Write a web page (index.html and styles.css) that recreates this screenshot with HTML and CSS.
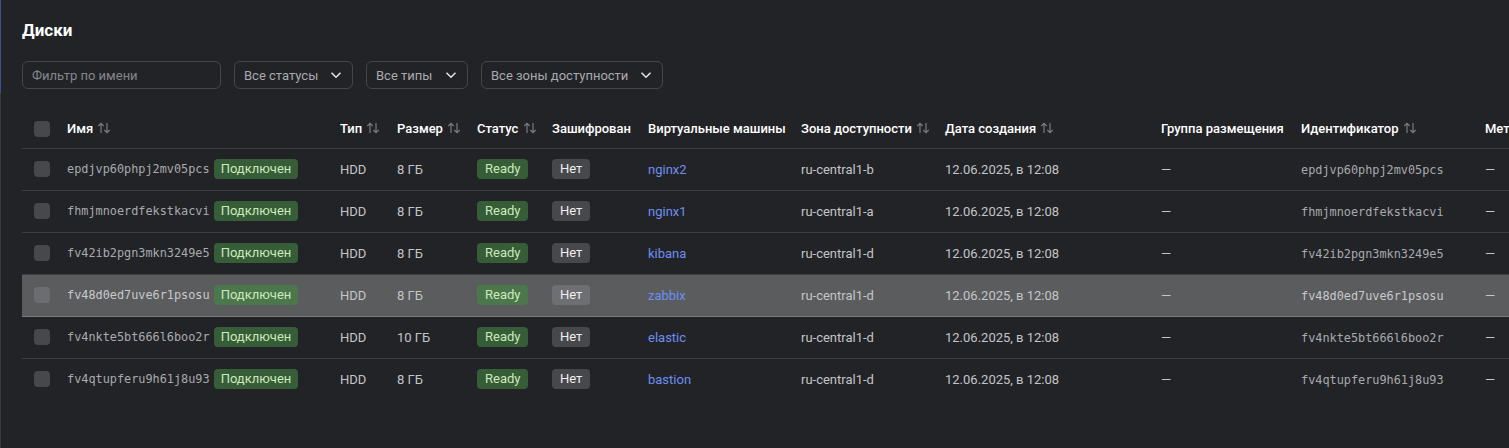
FILE: index.html
```html
<!DOCTYPE html>
<html lang="ru">
<head>
<meta charset="utf-8">
<title>Диски</title>
<link rel="stylesheet" href="styles.css">
</head>
<body>
<div class="page">
  <h1 class="title">Диски</h1>
  <div class="filters">
    <div class="input">Фильтр по имени</div>
    <div class="select s1"><span>Все статусы</span><svg class="chev" width="12" height="8" viewBox="0 0 12 8"><path d="M1.5 1.8 6 6.2 10.5 1.8" fill="none" stroke="#e6e6e6" stroke-width="1.5"/></svg></div>
    <div class="select s2"><span>Все типы</span><svg class="chev" width="12" height="8" viewBox="0 0 12 8"><path d="M1.5 1.8 6 6.2 10.5 1.8" fill="none" stroke="#e6e6e6" stroke-width="1.5"/></svg></div>
    <div class="select s3"><span>Все зоны доступности</span><svg class="chev" width="12" height="8" viewBox="0 0 12 8"><path d="M1.5 1.8 6 6.2 10.5 1.8" fill="none" stroke="#e6e6e6" stroke-width="1.5"/></svg></div>
  </div>
  <div class="table-wrap">
    <table class="grid">
      <colgroup>
        <col class="c-chk"><col class="c-name"><col class="c-type"><col class="c-size"><col class="c-status"><col class="c-enc"><col class="c-vm"><col class="c-zone"><col class="c-date"><col class="c-group"><col class="c-id"><col class="c-meta">
      </colgroup>
      <thead>
        <tr>
          <th><span class="chk"></span></th>
          <th>Имя <svg class="sort" width="14" height="12" viewBox="0 0 14 12"><path d="M4 11V1.3M1.3 4 4 1.3 6.7 4M10 1v9.7M7.3 8 10 10.7 12.7 8" fill="none" stroke="#7a7b7e" stroke-width="1.2"/></svg></th>
          <th>Тип <svg class="sort" width="14" height="12" viewBox="0 0 14 12"><path d="M4 11V1.3M1.3 4 4 1.3 6.7 4M10 1v9.7M7.3 8 10 10.7 12.7 8" fill="none" stroke="#7a7b7e" stroke-width="1.2"/></svg></th>
          <th>Размер <svg class="sort" width="14" height="12" viewBox="0 0 14 12"><path d="M4 11V1.3M1.3 4 4 1.3 6.7 4M10 1v9.7M7.3 8 10 10.7 12.7 8" fill="none" stroke="#7a7b7e" stroke-width="1.2"/></svg></th>
          <th>Статус <svg class="sort" width="14" height="12" viewBox="0 0 14 12"><path d="M4 11V1.3M1.3 4 4 1.3 6.7 4M10 1v9.7M7.3 8 10 10.7 12.7 8" fill="none" stroke="#7a7b7e" stroke-width="1.2"/></svg></th>
          <th>Зашифрован</th>
          <th>Виртуальные машины</th>
          <th>Зона доступности <svg class="sort" width="14" height="12" viewBox="0 0 14 12"><path d="M4 11V1.3M1.3 4 4 1.3 6.7 4M10 1v9.7M7.3 8 10 10.7 12.7 8" fill="none" stroke="#7a7b7e" stroke-width="1.2"/></svg></th>
          <th>Дата создания <svg class="sort" width="14" height="12" viewBox="0 0 14 12"><path d="M4 11V1.3M1.3 4 4 1.3 6.7 4M10 1v9.7M7.3 8 10 10.7 12.7 8" fill="none" stroke="#7a7b7e" stroke-width="1.2"/></svg></th>
          <th>Группа размещения</th>
          <th>Идентификатор <svg class="sort" width="14" height="12" viewBox="0 0 14 12"><path d="M4 11V1.3M1.3 4 4 1.3 6.7 4M10 1v9.7M7.3 8 10 10.7 12.7 8" fill="none" stroke="#7a7b7e" stroke-width="1.2"/></svg></th>
          <th>Метки</th>
        </tr>
      </thead>
      <tbody>
        <tr>
          <td><span class="chk"></span></td>
          <td><span class="name"><span class="mono">epdjvp60phpj2mv05pcs</span><span class="badge ok">Подключен</span></span></td>
          <td>HDD</td><td>8 ГБ</td>
          <td><span class="badge ok">Ready</span></td>
          <td><span class="badge no">Нет</span></td>
          <td><a class="link">nginx2</a></td>
          <td>ru-central1-b</td>
          <td>12.06.2025, в 12:08</td>
          <td>—</td>
          <td><span class="mono">epdjvp60phpj2mv05pcs</span></td>
          <td>—</td>
        </tr>
        <tr>
          <td><span class="chk"></span></td>
          <td><span class="name"><span class="mono">fhmjmnoerdfekstkacvi</span><span class="badge ok">Подключен</span></span></td>
          <td>HDD</td><td>8 ГБ</td>
          <td><span class="badge ok">Ready</span></td>
          <td><span class="badge no">Нет</span></td>
          <td><a class="link">nginx1</a></td>
          <td>ru-central1-a</td>
          <td>12.06.2025, в 12:08</td>
          <td>—</td>
          <td><span class="mono">fhmjmnoerdfekstkacvi</span></td>
          <td>—</td>
        </tr>
        <tr>
          <td><span class="chk"></span></td>
          <td><span class="name"><span class="mono">fv42ib2pgn3mkn3249e5</span><span class="badge ok">Подключен</span></span></td>
          <td>HDD</td><td>8 ГБ</td>
          <td><span class="badge ok">Ready</span></td>
          <td><span class="badge no">Нет</span></td>
          <td><a class="link">kibana</a></td>
          <td>ru-central1-d</td>
          <td>12.06.2025, в 12:08</td>
          <td>—</td>
          <td><span class="mono">fv42ib2pgn3mkn3249e5</span></td>
          <td>—</td>
        </tr>
        <tr class="hover">
          <td><span class="chk"></span></td>
          <td><span class="name"><span class="mono">fv48d0ed7uve6r1psosu</span><span class="badge ok">Подключен</span></span></td>
          <td>HDD</td><td>8 ГБ</td>
          <td><span class="badge ok">Ready</span></td>
          <td><span class="badge no">Нет</span></td>
          <td><a class="link">zabbix</a></td>
          <td>ru-central1-d</td>
          <td>12.06.2025, в 12:08</td>
          <td>—</td>
          <td><span class="mono">fv48d0ed7uve6r1psosu</span></td>
          <td>—</td>
        </tr>
        <tr>
          <td><span class="chk"></span></td>
          <td><span class="name"><span class="mono">fv4nkte5bt666l6boo2r</span><span class="badge ok">Подключен</span></span></td>
          <td>HDD</td><td>10 ГБ</td>
          <td><span class="badge ok">Ready</span></td>
          <td><span class="badge no">Нет</span></td>
          <td><a class="link">elastic</a></td>
          <td>ru-central1-d</td>
          <td>12.06.2025, в 12:08</td>
          <td>—</td>
          <td><span class="mono">fv4nkte5bt666l6boo2r</span></td>
          <td>—</td>
        </tr>
        <tr class="last">
          <td><span class="chk"></span></td>
          <td><span class="name"><span class="mono">fv4qtupferu9h61j8u93</span><span class="badge ok">Подключен</span></span></td>
          <td>HDD</td><td>8 ГБ</td>
          <td><span class="badge ok">Ready</span></td>
          <td><span class="badge no">Нет</span></td>
          <td><a class="link">bastion</a></td>
          <td>ru-central1-d</td>
          <td>12.06.2025, в 12:08</td>
          <td>—</td>
          <td><span class="mono">fv4qtupferu9h61j8u93</span></td>
          <td>—</td>
        </tr>
      </tbody>
    </table>
  </div>
</div>
</body>
</html>
```
FILE: styles.css
```css
* { box-sizing: border-box; }
html, body {
  margin: 0;
  height: 100%;
  background: #222327;
  overflow: hidden;
}
body {
  font-family: Roboto, Inter, sans-serif;
  font-size: 13px;
  color: #e8e8e8;
}
.page {
  height: 100%;
  padding: 18px 0 0 22px;
  background:
    linear-gradient(to bottom, #3d4f86 0, #3d4f86 93px, #38393d 93px) left top / 1px 100% no-repeat,
    #222327;
}
.title {
  margin: 0;
  font-size: 17px;
  line-height: 24px;
  font-weight: 700;
  color: #ffffff;
}
.filters {
  display: flex;
  gap: 13px;
  margin-top: 19px;
  height: 28px;
}
.input, .select {
  height: 28px;
  border: 1px solid #46474b;
  border-radius: 6px;
  display: flex;
  align-items: center;
  font-size: 13px;
}
.input {
  width: 199px;
  padding-left: 9px;
  color: #85868a;
}
.select {
  justify-content: space-between;
  padding: 0 10px 0 9px;
  color: #a9aaad;
}
.s1 { width: 119px; }
.s2 { width: 102px; }
.s3 { width: 182px; }
.chev { flex: none; }
.table-wrap {
  margin-top: 21px;
  overflow: hidden;
}
.grid {
  border-collapse: collapse;
  table-layout: fixed;
  width: 1651px;
}
.c-chk { width: 33px; }
.c-name { width: 273px; }
.c-type { width: 57px; }
.c-size { width: 80px; }
.c-status { width: 75px; }
.c-enc { width: 96px; }
.c-vm { width: 153px; }
.c-zone { width: 144px; }
.c-date { width: 216px; }
.c-group { width: 140px; }
.c-id { width: 184px; }
.c-meta { width: 200px; }
th, td {
  padding: 0 0 0 12px;
  text-align: left;
  white-space: nowrap;
  border-bottom: 1px solid #3e3f43;
}
th {
  height: 38px;
  font-weight: 500;
  color: #ffffff;
  font-size: 13px;
}
td {
  height: 42px;
  color: #c4c5c8;
}
.sort {
  vertical-align: -1px;
  margin-left: 1px;
}
.chk {
  display: inline-block;
  width: 16px;
  height: 16px;
  border-radius: 4px;
  background: #47484c;
  vertical-align: middle;
}
.name {
  display: inline-flex;
  align-items: center;
  gap: 4px;
  vertical-align: middle;
}
.mono {
  font-family: "DejaVu Sans Mono", monospace;
  font-size: 11.85px;
  color: #a9aaad;
}
.badge {
  display: inline-block;
  height: 20px;
  line-height: 20px;
  padding: 0 8px;
  border-radius: 4px;
  font-size: 13px;
  vertical-align: middle;
}
.name .badge { padding: 0 7px; }
.ok {
  background: #375c38;
  color: #cbeab8;
}
.no {
  background: #47484c;
  color: #f0f0f0;
}
.link {
  color: #6d8ff3;
  text-decoration: none;
}
tr.hover td {
  background: #5b5c5e;
  border-bottom-color: #7a7b7d;
}
tr.hover .chk { background: #6c6d70; }
tr.hover .ok { background: #4c774d; }
tr.hover .no { background: #6e6f72; }
tr.hover .mono { color: #c8c9cb; }
tr.last td { border-bottom-color: transparent; }
```
